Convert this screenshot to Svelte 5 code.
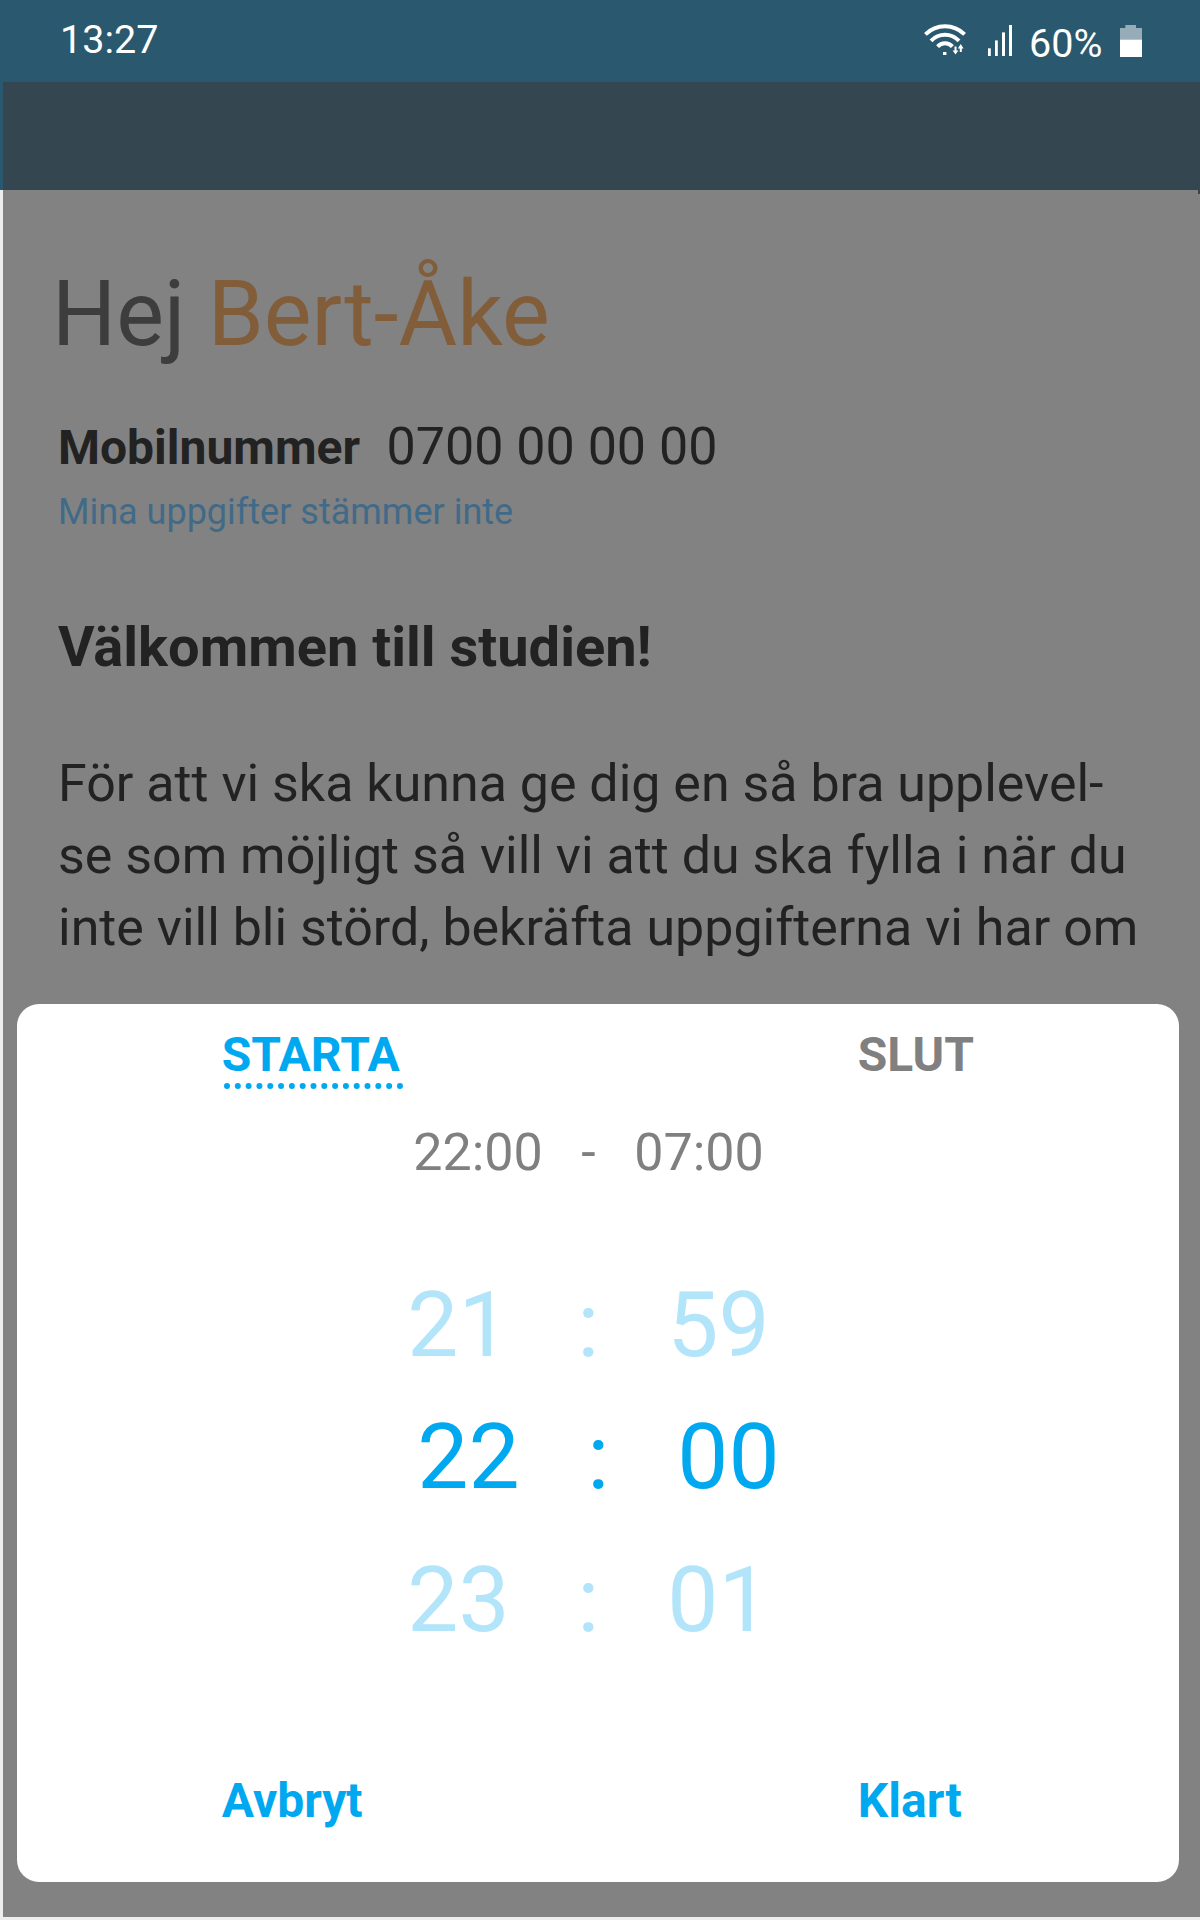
<script>
  const paragraph = [
    'För att vi ska kunna ge dig en så bra upplevel-',
    'se som möjligt så vill vi att du ska fylla i när du',
    'inte vill bli störd, bekräfta uppgifterna vi har om'
  ];
  const rows = [
    { hour: '21', minute: '59', active: false },
    { hour: '22', minute: '00', active: true },
    { hour: '23', minute: '01', active: false }
  ];
  const dots = Array.from({ length: 17 }, (_, i) => 3 + i * 10.81);
</script>

<div class="phone">
  <header class="status">
    <span class="clock">13:27</span>
    <div class="indicators">
      <svg class="wifi" width="42" height="32" viewBox="0 0 42 32">
        <g fill="none" stroke="#fff" stroke-width="4">
          <path d="M1.4 10.4C12.5-.4 29.5-.4 40.6 10.4" />
          <path d="M7 16.8C15 8.8 27 8.8 35 16.8" />
          <path d="M13.6 22.6C17.6 18.2 24.4 18.2 28.4 22.6" />
        </g>
        <rect x="19" y="28" width="3.4" height="3" fill="#fff" />
        <path d="M31.5 22.6v5M36.8 28v-5.4" stroke="#fff" stroke-width="2" />
        <path d="M28.6 26.4h5.8l-2.9 4.2zM33.8 24.4h5.8L36.7 20z" fill="#fff" />
      </svg>
      <svg class="signal" width="24" height="31" viewBox="0 0 24 31" fill="#fff">
        <rect x="0" y="23.3" width="2.8" height="7.7" />
        <rect x="7" y="15.4" width="2.8" height="15.6" />
        <rect x="14" y="7.4" width="3" height="23.6" />
        <rect x="21" y="0" width="3" height="31" />
      </svg>
      <span class="percent">60%</span>
      <svg class="battery" width="22" height="32" viewBox="0 0 22 32">
        <path d="M0 3h5.3V0H16v3h6v12H0z" fill="#96acb8" />
        <rect y="14.7" width="22" height="17.3" fill="#fff" />
      </svg>
    </div>
  </header>

  <div class="toolbar"></div>

  <main>
    <h1>Hej <span>Bert-Åke</span></h1>
    <div class="contact">
      <strong>Mobilnummer</strong>
      <span>0700 00 00 00</span>
    </div>
    <a class="wrong" href="#details">Mina uppgifter stämmer inte</a>
    <h2>Välkommen till studien!</h2>
    <p>
      {#each paragraph as line}
        <span>{line}</span>
      {/each}
    </p>

    <section class="sheet">
      <div class="pair tabs">
        <div class="tab selected">
          <span>STARTA</span>
          <svg width="180" height="6" viewBox="0 0 180 6" fill="#00a8f0">
            {#each dots as x}
              <circle cx={x} cy="3" r="3" />
            {/each}
          </svg>
        </div>
        <div class="tab">SLUT</div>
      </div>
      <div class="range">
        <span>22:00</span><span>-</span><span>07:00</span>
      </div>
      <div class="picker">
        {#each rows as row}
          <div class="time" class:active={row.active}>
            <span>{row.hour}</span><span>:</span><span>{row.minute}</span>
          </div>
        {/each}
      </div>
      <div class="pair actions">
        <button>Avbryt</button>
        <button>Klart</button>
      </div>
    </section>
  </main>
</div>

<style>
  :global(body) {
    margin: 0;
    background: #eeecec;
  }
  .phone {
    box-sizing: border-box;
    width: 1200px;
    height: 1920px;
    overflow: hidden;
    font-family: Roboto, sans-serif;
    color: #222;
    background: linear-gradient(#2a586e 190px, #eeecec 190px);
  }
  .status {
    display: flex;
    justify-content: space-between;
    box-sizing: border-box;
    height: 82px;
    padding: 0 58px 0 60px;
    color: #fff;
    background: #2a586e;
    font-size: 39.5px;
    line-height: 46px;
  }
  .clock {
    margin-top: 17px;
  }
  .indicators {
    display: flex;
    align-items: flex-start;
  }
  .wifi {
    margin: 24px 22px 0 0;
  }
  .signal {
    margin: 25px 17px 0 0;
  }
  .percent {
    width: 91px;
    margin-top: 21px;
  }
  .battery {
    margin-top: 25px;
  }
  .toolbar {
    height: 108px;
    margin-left: 3px;
    background: #34464f;
  }
  main {
    display: flex;
    flex-direction: column;
    box-sizing: border-box;
    height: 1727px;
    margin-left: 3px;
    padding: 75px 0 0 55px;
    background: linear-gradient(#34464f, #34464f) right top / 2px 4px no-repeat #828282;
  }
  h1,
  h2,
  p {
    margin: 0;
    white-space: nowrap;
  }
  h1 {
    margin-left: -6px;
    font-size: 90px;
    font-weight: 400;
    line-height: 100px;
    color: #3d3d3d;
  }
  h1 span {
    color: #825d3a;
  }
  .contact {
    display: flex;
    align-items: baseline;
    height: 60px;
    margin-top: 52px;
    font-size: 52px;
    line-height: 60px;
    white-space: nowrap;
  }
  .contact strong {
    width: 328.5px;
    font-size: 48px;
  }
  .wrong {
    margin-top: 13px;
    font-size: 36px;
    line-height: 44px;
    color: #416a88;
    text-decoration: none;
  }
  h2 {
    margin-top: 80px;
    font-size: 56px;
    line-height: 66px;
  }
  p {
    margin-top: 68px;
    font-size: 51.95px;
    line-height: 72px;
  }
  p span {
    display: block;
  }
  .sheet {
    box-sizing: border-box;
    width: 1161.4px;
    height: 878px;
    margin: 40px 0 0 -40.7px;
    padding-top: 23px;
    border-radius: 22px;
    background: #fff;
    color: #808080;
  }
  .pair {
    display: grid;
    grid-template-columns: 636px auto;
    padding-left: 204.5px;
    font-size: 48px;
    font-weight: 700;
    line-height: 56px;
  }
  .tabs {
    height: 64px;
  }
  .tab svg {
    display: block;
    margin-left: 2.5px;
  }
  .selected {
    color: #00a8f0;
  }
  .range {
    display: grid;
    grid-template-columns: 168px 53px auto;
    margin: 32px 0 0 396px;
    font-size: 52px;
    line-height: 60px;
  }
  .picker {
    padding: 92px 0 0 390px;
  }
  .time {
    display: grid;
    grid-template-columns: 170px 90px auto;
    margin-bottom: 32px;
    font-size: 91px;
    line-height: 100px;
    color: #b3e5fa;
  }
  .time.active {
    margin: 0 0 43px 10px;
    color: #00a8f0;
  }
  .actions {
    margin-top: 123px;
  }
  .time:last-child {
    margin-bottom: 0;
  }
  button {
    padding: 0;
    border: 0;
    background: none;
    color: #00a8f0;
    font: inherit;
    text-align: left;
  }
</style>
